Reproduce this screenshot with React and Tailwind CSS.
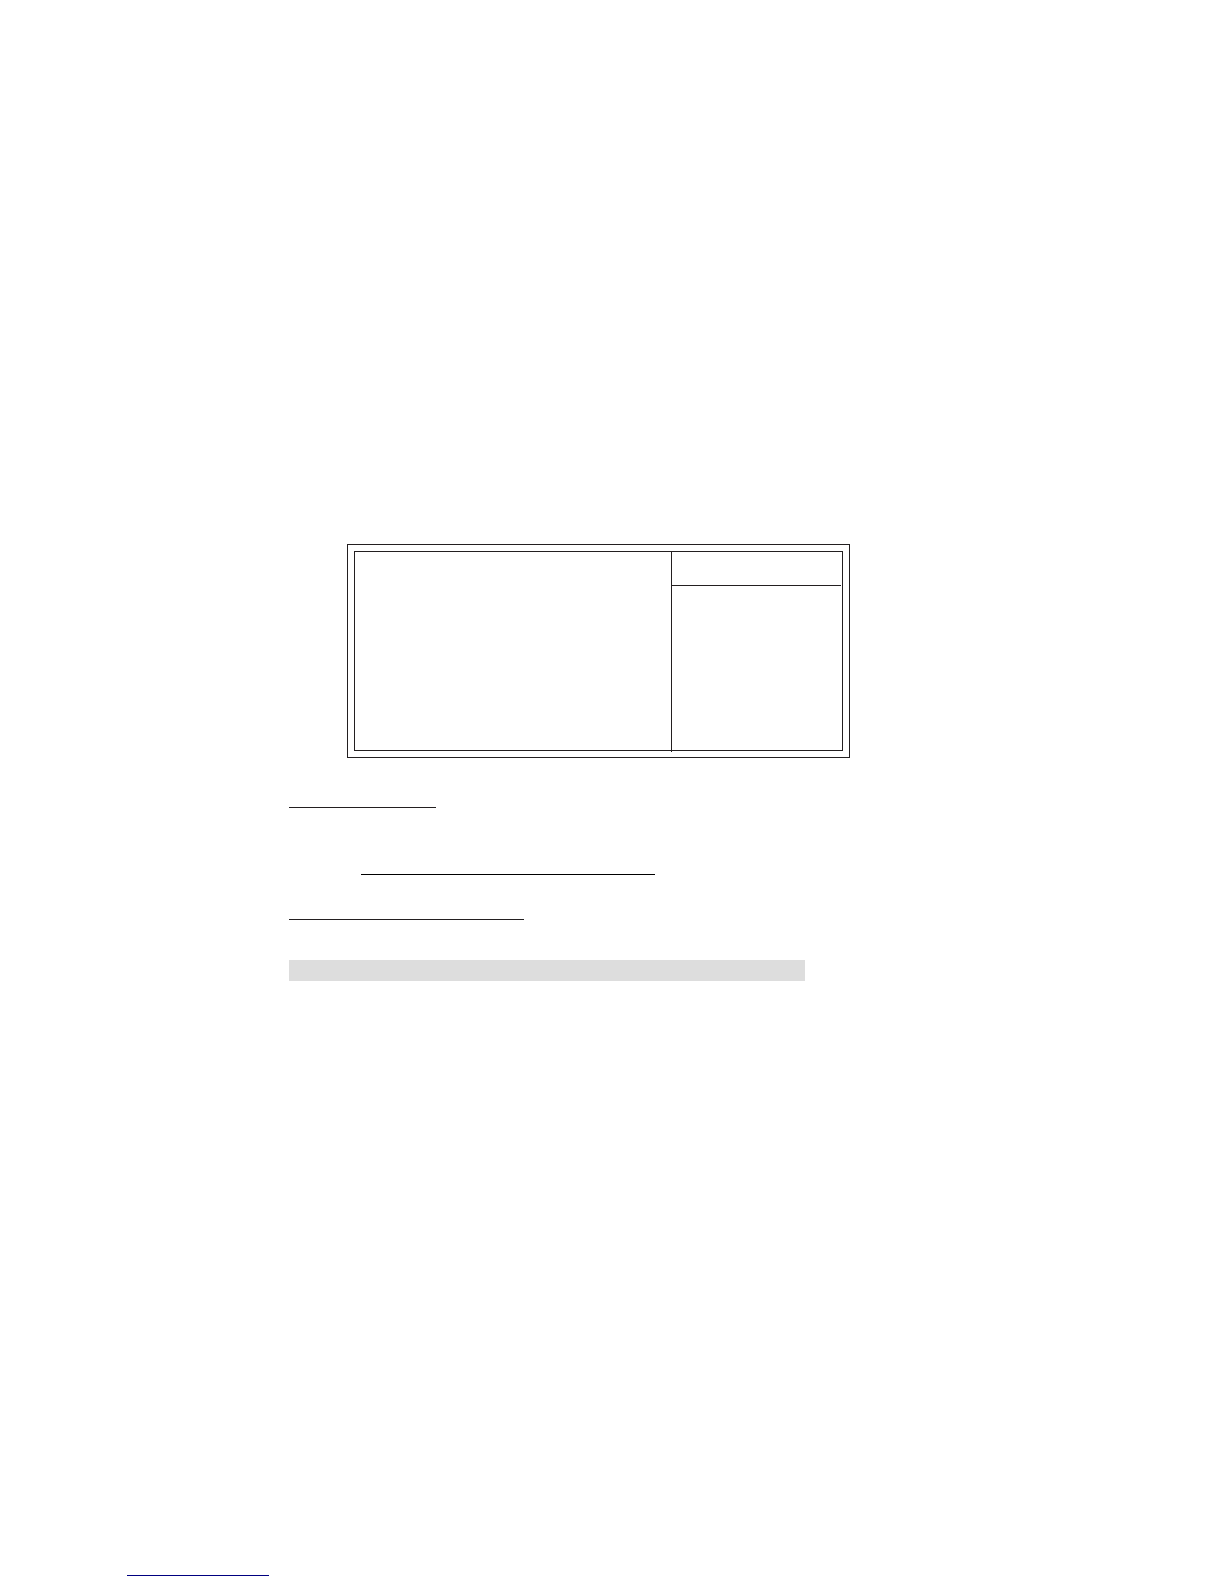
function SettingsFrame() {
  return (
    <section className="ml-[58px] max-w-[503px] border border-[#231f20] p-1.5">
      <div className="flex h-[200px] border border-[#231f20]">
        <div className="flex-1" />
        {/* the divider runs just past the bottom border */}
        <div className="-mb-0.5 w-[171px] border-l border-[#231f20]">
          <div className="mr-px h-[34px] border-b border-[#231f20]" />
        </div>
      </div>
    </section>
  );
}

function Rule({ className }) {
  return <hr className={`border-t ${className}`} />;
}

function App() {
  return (
    <div className="min-h-screen bg-white pt-[544px] pb-2">
      <main className="ml-[289px]">
        <SettingsFrame />
        <Rule className="mt-[49px] max-w-[147px] border-[#231f20]" />
        <Rule className="mt-[66px] ml-[72px] max-w-[294px] border-black" />
        <Rule className="mt-11 max-w-[235px] border-[#231f20]" />
        <div className="mt-10 h-[21px] max-w-[516px] bg-[#dddddd]" />
      </main>
      <footer className="mt-[594px] ml-[127px]">
        <Rule className="max-w-[142px] border-[#000080]" />
      </footer>
    </div>
  );
}

export default App;
